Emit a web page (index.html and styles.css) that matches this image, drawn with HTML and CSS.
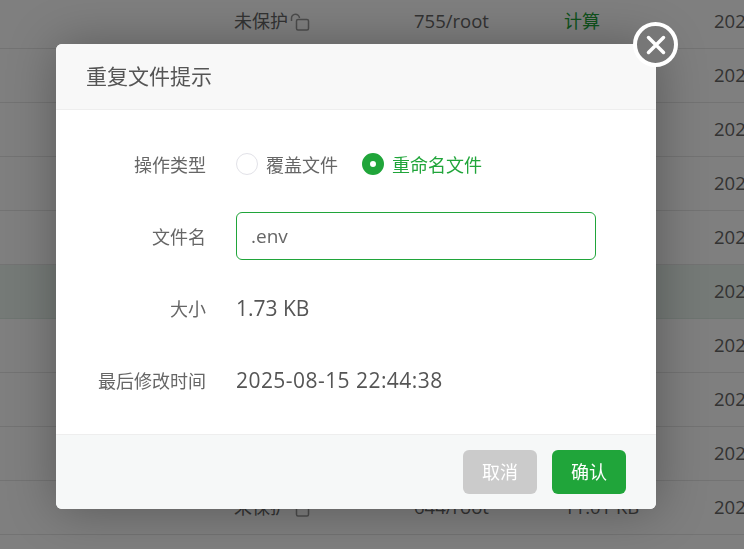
FILE: index.html
```html
<!DOCTYPE html>
<html lang="zh-CN">
<head>
<meta charset="utf-8">
<title>重复文件提示</title>
<link rel="stylesheet" href="styles.css">
</head>
<body>
<main class="table">
  <div class="row"><span class="cell">未保护<svg class="lock" viewBox="0 0 20 18" width="20" height="18"><path d="M1.500 8V5.500a4 4 0 0 1 8-.5"/><rect x="6.500" y="6.500" width="12" height="10.500" rx="1.500"/></svg></span><span class="cell num">755/root</span><span class="cell green">计算</span><span class="cell num">2025</span></div>
  <div class="row"><span></span><span></span><span></span><span class="cell num">2025</span></div>
  <div class="row"><span></span><span></span><span></span><span class="cell num">2025</span></div>
  <div class="row"><span></span><span></span><span></span><span class="cell num">2025</span></div>
  <div class="row"><span></span><span></span><span></span><span class="cell num">2025</span></div>
  <div class="row selected"><span></span><span></span><span></span><span class="cell num">2025</span></div>
  <div class="row"><span></span><span></span><span></span><span class="cell num">2025</span></div>
  <div class="row"><span></span><span></span><span></span><span class="cell num">2025</span></div>
  <div class="row"><span></span><span></span><span></span><span class="cell num">2025</span></div>
  <div class="row"><span class="cell">未保护<svg class="lock" viewBox="0 0 20 18" width="20" height="18"><path d="M1.500 8V5.500a4 4 0 0 1 8-.5"/><rect x="6.500" y="6.500" width="12" height="10.500" rx="1.500"/></svg></span><span class="cell num">644/root</span><span class="cell num">11.01 KB</span><span class="cell num">2025</span></div>
</main>
<div class="shade"></div>
<section class="dialog">
  <header class="dialog-head">重复文件提示</header>
  <div class="dialog-body">
    <div class="field">
      <span class="label">操作类型</span>
      <div class="radios">
        <span class="radio"><i class="dot"></i>覆盖文件</span>
        <span class="radio on"><i class="dot"></i>重命名文件</span>
      </div>
    </div>
    <div class="field">
      <span class="label">文件名</span>
      <div class="input">.env</div>
    </div>
    <div class="field">
      <span class="label">大小</span>
      <span class="value">1.73 KB</span>
    </div>
    <div class="field">
      <span class="label">最后修改时间</span>
      <span class="value date">2025-08-15 22:44:38</span>
    </div>
  </div>
  <footer class="dialog-foot">
    <span class="btn cancel">取消</span>
    <span class="btn ok">确认</span>
  </footer>
  <span class="close"><svg viewBox="0 0 36 36" width="36" height="36"><path d="M10.500 10.500l15 15M25.500 10.500l-15 15"/></svg></span>
</section>
</body>
</html>
```
FILE: styles.css
```css
* { box-sizing: border-box; }
html, body { height: 100%; }
body {
  margin: 0;
  overflow: hidden;
  background: #fff;
  color: #666;
  font-family: "Open Sans", "Noto Sans CJK SC", sans-serif;
  font-size: 18px;
}
.table { margin-top: -5px; }
.row {
  display: grid;
  grid-template-columns: 180px 150px 150px 1fr;
  height: 54px;
  padding-left: 234px;
  align-items: center;
  border-bottom: 1px solid #e6e6e6;
  white-space: nowrap;
  overflow: hidden;
}
.row.selected { background: #ebf5ef; border-bottom-color: #dcebe2; }
.cell { display: flex; align-items: center; margin-bottom: 3px; }
.num { font-size: 18.500px; }
.green { color: #20a53a; }
.lock { margin-left: 2px; margin-top: 4px; fill: none; stroke: #999; stroke-width: 1.500; }
.shade {
  position: fixed;
  inset: 0;
  background: rgba(0, 0, 0, .5);
}
.dialog {
  position: absolute;
  left: 56px;
  top: 44px;
  width: 600px;
  height: 465px;
  display: flex;
  flex-direction: column;
  background: #fff;
  border-radius: 6px;
  box-shadow: 1px 1px 50px rgba(0, 0, 0, .3);
}
.dialog-head {
  height: 66px;
  padding: 0 30px;
  line-height: 65px;
  font-size: 21px;
  color: #555;
  background: #f8f8f8;
  border-bottom: 1px solid #eee;
  border-radius: 6px 6px 0 0;
}
.dialog-body {
  flex: 1;
  padding-top: 18px;
  display: flex;
  flex-direction: column;
}
.field {
  display: flex;
  align-items: center;
  height: 72px;
}
.label {
  width: 150px;
  margin-right: 30px;
  text-align: right;
  color: #666;
}
.radios { display: flex; gap: 24px; }
.radio {
  display: flex;
  align-items: center;
  gap: 8px;
  color: #666;
}
.dot {
  width: 22px;
  height: 22px;
  border: 1px solid #e2e2e8;
  border-radius: 50%;
  background: #fff;
}
.radio.on { color: #20a53a; }
.radio.on .dot {
  border: 8px solid #20a53a;
}
.input {
  width: 360px;
  height: 48px;
  padding: 0 14px;
  line-height: 46px;
  border: 1px solid #20a53a;
  border-radius: 6px;
  color: #666;
  font-size: 19px;
}
.value { font-size: 21px; color: #555; }
.date { letter-spacing: .45px; }
.dialog-foot {
  height: 75px;
  padding: 15px 30px 0 0;
  display: flex;
  justify-content: flex-end;
  gap: 15px;
  background: #f6f8f8;
  border-top: 1px solid #eee;
  border-radius: 0 0 6px 6px;
}
.btn {
  width: 74px;
  height: 44px;
  line-height: 44px;
  text-align: center;
  color: #fff;
  border-radius: 6px;
  font-size: 18px;
}
.cancel { background: #cbcbcb; }
.ok { background: #20a53a; }
.close {
  position: absolute;
  right: -22px;
  top: -22px;
  width: 45px;
  height: 45px;
  display: flex;
  align-items: center;
  justify-content: center;
  border: 4.500px solid #fff;
  border-radius: 50%;
  background: #777;
}
.close svg { fill: none; stroke: #fff; stroke-width: 3.500; stroke-linecap: round; }
```
